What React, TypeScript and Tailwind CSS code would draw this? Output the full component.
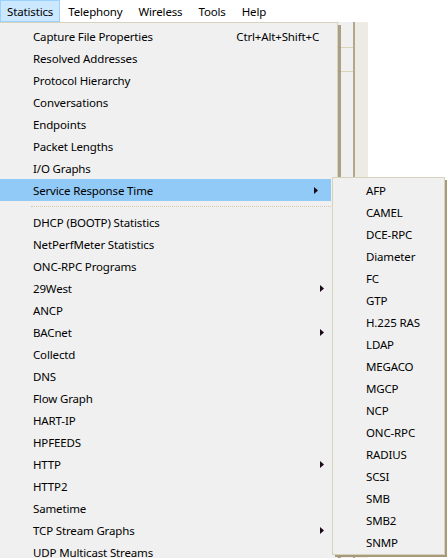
import React from 'react';

const menuBar = ['Statistics', 'Telephony', 'Wireless', 'Tools', 'Help'];

type Item = { label: string; shortcut?: string; sub?: boolean; active?: boolean; sep?: boolean };

const mainItems: Item[] = [
  { label: 'Capture File Properties', shortcut: 'Ctrl+Alt+Shift+C' },
  { label: 'Resolved Addresses' },
  { label: 'Protocol Hierarchy' },
  { label: 'Conversations' },
  { label: 'Endpoints' },
  { label: 'Packet Lengths' },
  { label: 'I/O Graphs' },
  { label: 'Service Response Time', sub: true, active: true },
  { label: '', sep: true },
  { label: 'DHCP (BOOTP) Statistics' },
  { label: 'NetPerfMeter Statistics' },
  { label: 'ONC-RPC Programs' },
  { label: '29West', sub: true },
  { label: 'ANCP' },
  { label: 'BACnet', sub: true },
  { label: 'Collectd' },
  { label: 'DNS' },
  { label: 'Flow Graph' },
  { label: 'HART-IP' },
  { label: 'HPFEEDS' },
  { label: 'HTTP', sub: true },
  { label: 'HTTP2' },
  { label: 'Sametime' },
  { label: 'TCP Stream Graphs', sub: true },
  { label: 'UDP Multicast Streams' },
];

const subItems = [
  'AFP', 'CAMEL', 'DCE-RPC', 'Diameter', 'FC', 'GTP', 'H.225 RAS', 'LDAP', 'MEGACO',
  'MGCP', 'NCP', 'ONC-RPC', 'RADIUS', 'SCSI', 'SMB', 'SMB2', 'SNMP',
];

const Arrow = () => (
  <svg width="4" height="7" viewBox="0 0 4 7" className="block">
    <path d="M0 0 L4 3.5 L0 7 Z" fill="#1a0a1a" />
  </svg>
);

export default function App() {
  return (
    <div
      className="relative w-[447px] h-[558px] overflow-hidden bg-white text-[11.5px] tracking-[-0.15px] text-black"
      style={{ fontFamily: '"Noto Sans", "Segoe UI", sans-serif' }}
    >
      {/* menu bar */}
      <div className="flex h-[22px] items-stretch bg-white">
        {menuBar.map((m, i) => (
          <div
            key={m}
            className={
              i === 0
                ? 'flex items-center pt-[2px] px-[6px] bg-[#cce8ff] border border-[#99d1ff]'
                : 'flex items-center pt-[2px] px-[7px] border border-transparent'
            }
          >
            {m}
          </div>
        ))}
      </div>

      {/* window content behind the menus */}
      <div className="flex h-[536px]">
        <div className="w-[338px]" />
        <div className="w-[15px] bg-[#f0f0f0] flex flex-col">
          <div className="h-[26px] border-b border-[#d8d4b8]" />
          <div className="h-[24px] border-b border-[#d8d4b8]" />
        </div>
        <div className="w-[2px] bg-[#b3a68c]" />
        <div className="w-[13px] bg-[#ecebe4]" />
        <div className="flex-1 bg-white" />
      </div>

      {/* main dropdown */}
      <div className="absolute left-0 top-[22px] w-[341px] flex">
        <div className="w-[338px] bg-[#f0f0f0] border border-l-0 border-[#d6d3bb] pt-[2px] pb-[2px]">
          {mainItems.map((it, i) =>
            it.sep ? (
              <div key={i} className="h-[10px] flex items-center pl-[31px] pr-[6px]">
                <div className="w-full border-t border-dotted border-[#cfcbb0]" />
              </div>
            ) : (
              <div
                key={i}
                className={`h-[22px] flex items-center pt-[1px] pl-[33px] pr-[13px] ${
                  it.active ? 'bg-[#91c9f7] mr-[6px] pr-[7px]' : ''
                }`}
              >
                <span className="flex-1 whitespace-nowrap">{it.label}</span>
                {it.shortcut && <span className="whitespace-nowrap mr-[5px]">{it.shortcut}</span>}
                {it.sub && <Arrow />}
              </div>
            )
          )}
        </div>
        <div className="w-[3px] mt-[3px] bg-[#9c8a6c] opacity-80" />
      </div>

      {/* service response time submenu */}
      <div className="absolute left-[332px] top-[177px] flex flex-col">
        <div className="flex">
          <div className="w-[113px] bg-[#f0f0f0] border border-[#d6d3bb] pt-[1px] pb-[1px]">
            {subItems.map((s) => (
              <div key={s} className="h-[22px] flex items-center pt-[1px] pl-[33px] whitespace-nowrap">
                {s}
              </div>
            ))}
          </div>
          <div className="w-[2px] mt-[3px] bg-[#a8987c]" />
        </div>
        <div className="h-[2px] ml-[3px] w-[112px] bg-[#a8987c]" />
      </div>
    </div>
  );
}
